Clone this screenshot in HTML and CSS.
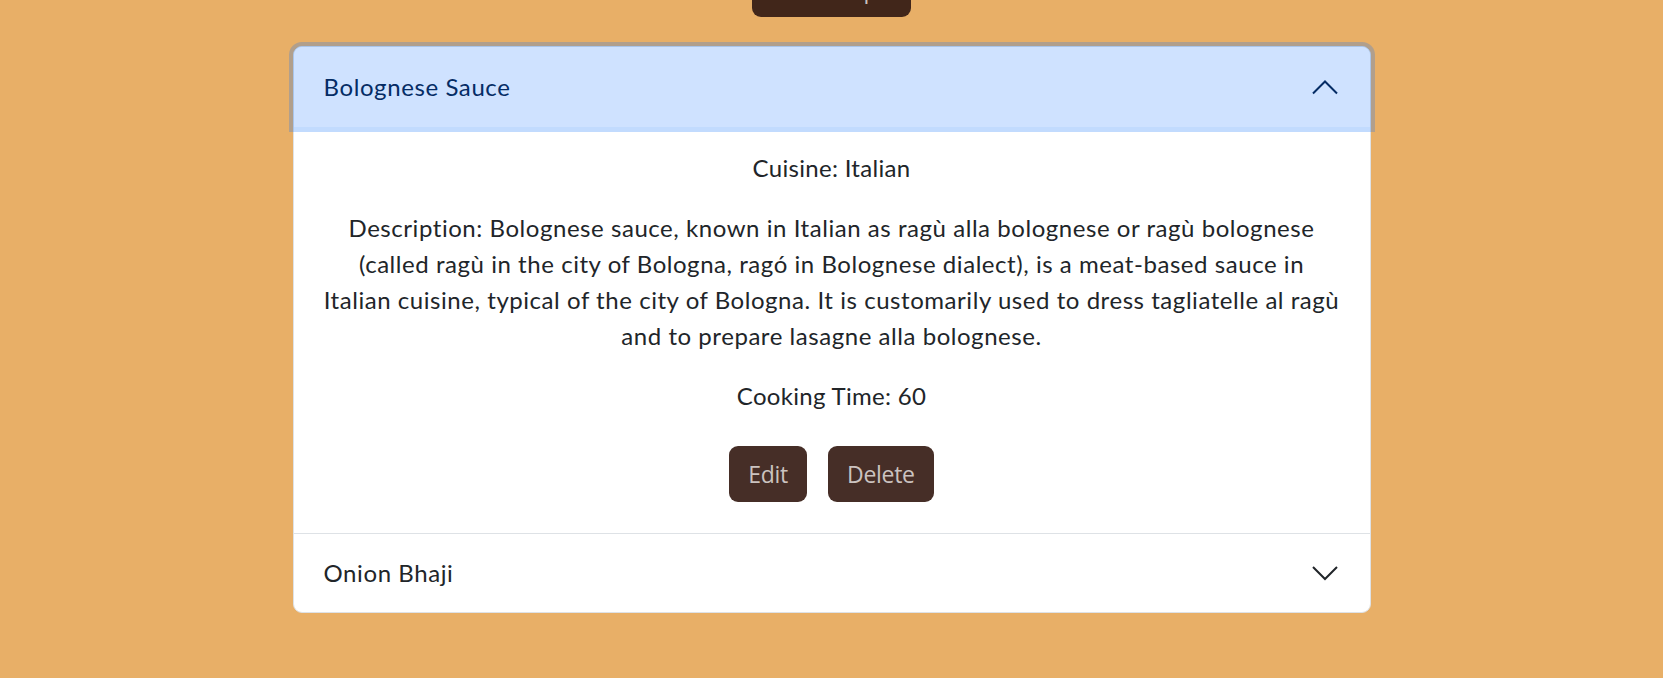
FILE: index.html
```html
<!DOCTYPE html>
<html lang="en">
<head>
<meta charset="utf-8">
<title>Recipes</title>
<link rel="stylesheet" href="styles.css">
</head>
<body>
  <div class="top-bar">
    <button class="btn btn-top">Add Recipe</button>
  </div>

  <div class="accordion">
    <div class="acc-item acc-item-open">
      <div class="acc-header acc-header-active">
        <span class="acc-title">Bolognese Sauce</span>
        <svg class="chev chev-up" width="26" height="16" viewBox="0 0 26 16" aria-hidden="true">
          <polyline points="1,14.5 13,2.5 25,14.5" fill="none" stroke="currentColor" stroke-width="2"/>
        </svg>
      </div>
      <div class="acc-body">
        <p class="short">Cuisine: Italian</p>
        <p class="desc">Description: Bolognese sauce, known in Italian as ragù alla bolognese or ragù bolognese (called ragù in the city of Bologna, ragó in Bolognese dialect), is a meat-based sauce in Italian cuisine, typical of the city of Bologna. It is customarily used to dress tagliatelle al ragù and to prepare lasagne alla bolognese.</p>
        <p class="short">Cooking Time: 60</p>
        <div class="actions">
          <button class="btn">Edit</button>
          <button class="btn">Delete</button>
        </div>
      </div>
    </div>
    <div class="acc-item">
      <div class="acc-header">
        <span class="acc-title">Onion Bhaji</span>
        <svg class="chev" width="26" height="16" viewBox="0 0 26 16" aria-hidden="true">
          <polyline points="1,2 13,14 25,2" fill="none" stroke="currentColor" stroke-width="2"/>
        </svg>
      </div>
    </div>
  </div>
</body>
</html>
```

FILE: styles.css
```css
* {
  box-sizing: border-box;
}

html, body {
  margin: 0;
  padding: 0;
}

body {
  background: #e8af67;
  font-family: "Lato", "Open Sans", sans-serif;
  color: #212529;
  min-height: 678px;
}

.top-bar {
  display: flex;
  justify-content: center;
}

.btn {
  font-family: "Open Sans", "Noto Sans", sans-serif;
  font-size: 23px;
  letter-spacing: -0.3px;
  line-height: 36px;
  padding: 9px 18px;
  border: 1px solid transparent;
  border-radius: 9px;
  background: #462e27;
  color: #cbc3c0;
  cursor: pointer;
}

.btn-top {
  width: 159px;
  height: 56px;
  margin-top: -39px;
  background: #41261a;
}

.accordion {
  width: 1078px;
  margin: 29px auto 0;
  background: #fff;
  border-radius: 9px;
  border: 1px solid #dee2e6;
}

.acc-item + .acc-item {
  border-top: 1px solid #dee2e6;
}

.acc-header {
  display: flex;
  align-items: center;
  justify-content: space-between;
  height: 78px;
  padding: 0 31px 0 30px;
  font-size: 24px;
  line-height: 36px;
  color: #212529;
}

.acc-header-active {
  position: relative;
  z-index: 2;
  height: 80px;
  background: #cfe2ff;
  color: #052c65;
  border-radius: 8px 8px 0 0;
  box-shadow: 0 0 0 5px rgba(13, 110, 253, 0.25);
}

.acc-title {
  letter-spacing: 0.6px;
}

.chev {
  display: block;
  color: #212529;
  margin-right: 1px;
}

.chev-up {
  color: #052c65;
}

.acc-body {
  padding: 23px 30px 31px;
  text-align: center;
  font-size: 24px;
  line-height: 36px;
}

.acc-body p {
  margin: 0 0 24px;
}

.acc-body .short {
  letter-spacing: 0.3px;
}

.acc-body .desc {
  letter-spacing: 0.55px;
}

.actions {
  display: flex;
  justify-content: center;
  gap: 21px;
  margin-top: 32px;
}
```
